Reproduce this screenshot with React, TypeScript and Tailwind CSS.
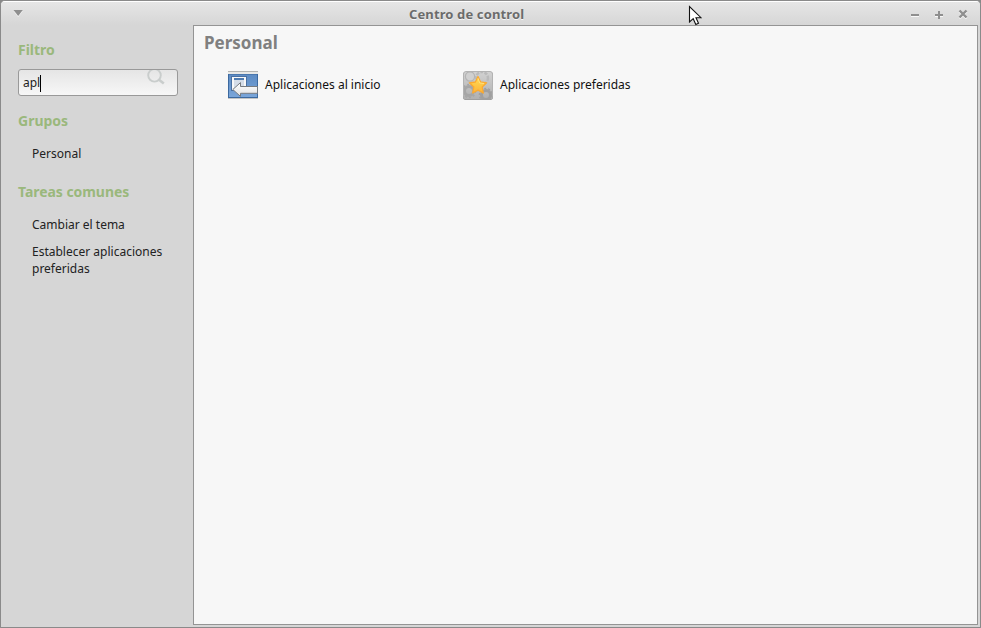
import React from "react";

function StartupIcon() {
  return (
    <svg width="32" height="32" viewBox="0 0 32 32" className="block shrink-0">
      <defs>
        <linearGradient id="screen" x1="0" y1="0" x2="0" y2="1">
          <stop offset="0" stopColor="#5b8ac2" />
          <stop offset="1" stopColor="#7ba6da" />
        </linearGradient>
        <linearGradient id="arrow" x1="0" y1="0" x2="0" y2="1">
          <stop offset="0" stopColor="#ffffff" />
          <stop offset="1" stopColor="#e2e2e2" />
        </linearGradient>
      </defs>
      <rect x="1" y="29" width="30" height="1" fill="#c4c4c4" />
      <rect x="1.5" y="4.5" width="29" height="24" fill="url(#screen)" stroke="#3c699f" />
      <rect x="1" y="2" width="30" height="3" fill="#e8e8e6" />
      <path d="M1 2.5H31" stroke="#b4b4b1" />
      <path d="M2 5.5H30" stroke="#4b78af" />
      <rect x="4.5" y="7.5" width="15" height="14" fill="#f8f8f8" stroke="#4a70a1" />
      <path d="M7 10H17" stroke="#4f7bb0" strokeWidth="2" />
      <rect x="7" y="11" width="10" height="8" fill="#d5dde8" />
      <path d="M5.8 20.5 13.5 13.6V17.5H30.5V24.3H13.5V27.4Z" fill="url(#arrow)" stroke="#777b80" strokeLinejoin="round" />
    </svg>
  );
}

function PreferredIcon() {
  return (
    <svg width="32" height="32" viewBox="0 0 32 32" className="block shrink-0">
      <defs>
        <linearGradient id="plate" x1="0" y1="0" x2="0" y2="1">
          <stop offset="0" stopColor="#d2d2d2" />
          <stop offset="1" stopColor="#b0b0b0" />
        </linearGradient>
        <linearGradient id="star" x1="0" y1="0" x2="0" y2="1">
          <stop offset="0" stopColor="#ffdd55" />
          <stop offset="1" stopColor="#fcb33a" />
        </linearGradient>
        <clipPath id="plateClip"><rect x="2" y="3" width="28" height="27" rx="2" /></clipPath>
      </defs>
      <rect x="1" y="3" width="30" height="28" rx="3" fill="#8a8a8a" />
      <rect x="1.5" y="2.5" width="29" height="27.5" rx="2.5" fill="url(#plate)" stroke="#b3b3b3" />
      <g clipPath="url(#plateClip)" fill="none">
        <circle cx="8" cy="7.5" r="4.6" fill="#d0d0d0" stroke="#b4b4b4" strokeWidth="1.2" />
        <circle cx="20" cy="9" r="6" stroke="#bababa" strokeWidth="2.5" strokeDasharray="3 1.3" />
        <circle cx="7" cy="22" r="4.5" stroke="#a6a6a6" strokeWidth="3" />
        <circle cx="7" cy="22" r="6.5" stroke="#a6a6a6" strokeWidth="1.5" strokeDasharray="2 2" />
        <circle cx="24" cy="26" r="4.5" stroke="#a0a0a0" strokeWidth="3" />
        <circle cx="24" cy="26" r="6.5" stroke="#a0a0a0" strokeWidth="1.5" strokeDasharray="2 2" />
      </g>
      <path d="m16 7.5 2.6 5.5 6 .8-4.4 4.2 1.1 6-5.3-2.9-5.3 2.9 1.1-6-4.4-4.2 6-.8Z" fill="url(#star)" stroke="#fbaa30" strokeWidth="1.3" strokeLinejoin="round" />
      <path d="m16 9.3 1.7 4.6 4.3.6" fill="none" stroke="#ffe88a" strokeWidth="0.8" />
    </svg>
  );
}

function TitleBar() {
  return (
    <header className="relative flex h-6 shrink-0 items-start justify-between border-t border-white bg-linear-to-b from-[#e6e6e6] to-[#d6d6d6]">
      <svg width="12" height="12" viewBox="0 0 12 12" className="ml-[11px] mt-[6px]">
        <path d="M1.5 3H10.8L6.2 9Z" fill="#f4f4f4" />
        <path d="M1.5 2H10.8L6.2 8Z" fill="#8f8f8f" />
      </svg>
      <h1 className="absolute left-[408px] top-[3px] text-[13px] font-bold leading-[18px] tracking-[0.12px] text-[#6b6b6b] [text-shadow:0_1px_0_#f4f4f4]">
        Centro de control
      </h1>
      <svg width="60" height="14" viewBox="0 0 60 14" className="mr-[10px] mt-[4px]" fill="none" strokeWidth="2">
        <path d="M1 10H9M25 10H33M29 6V13" stroke="#f8f8f8" />
        <path d="M49.5 5.5 56.5 12.5M56.5 5.5 49.5 12.5" stroke="#f8f8f8" strokeWidth="2.4" />
        <path d="M1 9H9M25 9H33M29 5V13" stroke="#8f8f8f" />
        <path d="M49.5 4.5 56.5 11.5M56.5 4.5 49.5 11.5" stroke="#8f8f8f" strokeWidth="2.4" />
      </svg>
      <svg width="14" height="21" viewBox="0 0 14 21" className="absolute left-[687px] top-[3px] z-10">
        <path d="M1.5 1.5V17L5.2 13.7 7.8 19.5 10.5 18.2 8 12.7H13Z" fill="#fff" stroke="#111" strokeWidth="1.1" />
      </svg>
    </header>
  );
}

function Sidebar() {
  return (
    <aside className="w-48 shrink-0 pl-[17px] pr-[15px] pt-[15px]">
      <h2 className="text-[14px] font-bold leading-[19px] text-[#9ab87c]">Filtro</h2>
      <div className="mt-[10px] flex h-[27px] items-start justify-between overflow-hidden rounded-[3px] border border-[#999] bg-linear-to-b from-[#e5e5e5] to-[#f7f7f7] pl-1 pr-[11px]">
        <div className="mt-[4px] flex items-center text-[12px] leading-[18px] text-[#222]">
          apl<span className="h-[17px] w-px bg-black" />
        </div>
        <svg width="20" height="16" viewBox="0 0 20 16" fill="none" stroke="#c9cdcc">
          <circle cx="8.5" cy="5.3" r="6.3" strokeWidth="1.9" />
          <path d="m13 9.7 4.8 3.8" strokeWidth="2.6" />
        </svg>
      </div>
      <h2 className="mt-[15px] text-[14px] font-bold leading-[19px] text-[#9ab87c]">Grupos</h2>
      <p className="ml-[14px] mt-[15px] text-[12px] leading-[17px] text-[#222]">Personal</p>
      <h2 className="mt-[20px] text-[14px] font-bold leading-[19px] tracking-[-0.05px] text-[#9ab87c]">Tareas comunes</h2>
      <p className="ml-[14px] mt-[15px] text-[12px] leading-[17px] text-[#222]">Cambiar el tema</p>
      <p className="ml-[14px] mt-[10px] text-[12px] leading-[17px] text-[#222]">
        Establecer aplicaciones<br />preferidas
      </p>
    </aside>
  );
}

export default function App() {
  return (
    <div className="h-[628px] w-[981px] bg-[#888] font-['Noto_Sans',sans-serif]">
      <div className="flex h-full flex-col overflow-hidden rounded-t-[5px] border border-[#8a8a8a] bg-[#d6d6d6]">
        <TitleBar />
        <div className="flex min-h-0 flex-1">
          <Sidebar />
          <main className="mb-[2px] mr-[2px] flex-1 border border-[#949494] bg-[#f7f7f7] pl-[10px]">
            <h2 className="mt-[5px] text-[17px] font-bold leading-6 text-[#808080]">Personal</h2>
            <div className="ml-[23px] mt-[14px] flex text-[12px] text-[#111]">
              <div className="flex w-[235px] items-center gap-[6px]"><StartupIcon />Aplicaciones al inicio</div>
              <div className="flex w-[235px] items-center gap-[6px]"><PreferredIcon />Aplicaciones preferidas</div>
            </div>
          </main>
        </div>
      </div>
    </div>
  );
}
